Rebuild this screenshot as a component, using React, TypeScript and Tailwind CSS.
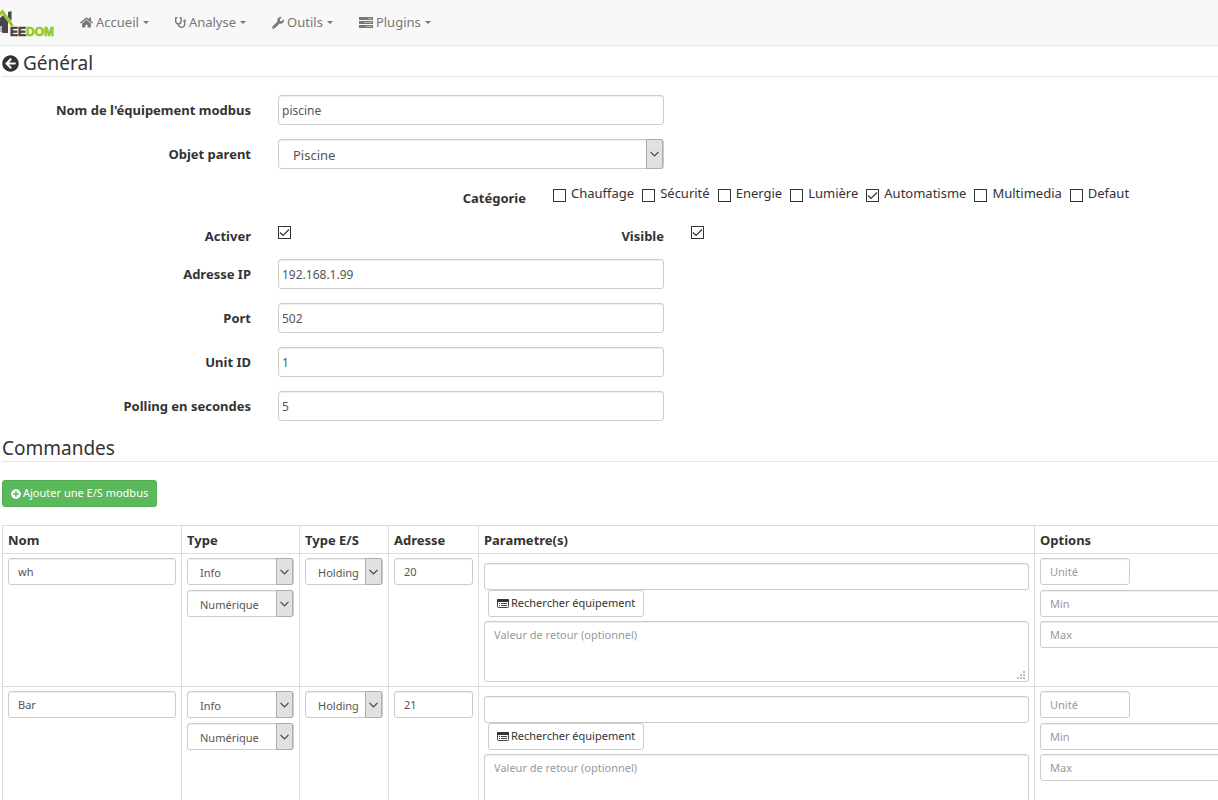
import { useState } from "react";
import { FaArrowCircleLeft, FaHome, FaPlusCircle, FaStethoscope, FaWrench } from "react-icons/fa";

const categories = ["Chauffage", "Sécurité", "Energie", "Lumière", "Automatisme", "Multimedia", "Defaut"];

const commands = [
  { id: 1, name: "wh", address: "20" },
  { id: 2, name: "Bar", address: "21" },
];

const control =
  "min-w-0 border border-[#ccc] rounded-[3px] bg-white text-[#555] placeholder:text-[#999] shadow-[inset_0_1px_1px_rgba(0,0,0,0.075)] focus:outline-none focus:border-[#66afe9]";
const small = control + " h-[27px] px-[9px] text-[11px]";
const formLabel = "pt-[6px] text-right font-bold leading-[18px]";

function TasksIcon() {
  return (
    <svg width="14" height="11" viewBox="0 0 14 11" fill="currentColor" aria-hidden="true">
      <path d="M0 0h14v3H0zM0 4h14v3H0zM0 8h14v3H0z" />
      <path d="M9 1h4v1H9zM5 5h8v1H5zM7 9h6v1H7z" fill="#f8f8f8" opacity="0.5" />
    </svg>
  );
}

function ListAltIcon() {
  return (
    <svg width="12" height="9" viewBox="0 0 12 9" fill="none" aria-hidden="true">
      <rect x="0.5" y="0.5" width="11" height="8" rx="0.8" stroke="#444" />
      <path d="M0 1a1 1 0 0 1 1-1h10a1 1 0 0 1 1 1v2H0z" fill="#333" />
      <path d="M2 4.500h1M4 4.500h6M2 6.500h1M4 6.500h6" stroke="#444" />
    </svg>
  );
}

function Logo() {
  return (
    <svg width="56" height="34" viewBox="0 0 56 34" role="img" aria-label="Jeedom">
      <path d="M0 12 3 9l5 7v11H3l-3-2z" fill="#45454b" />
      <path d="M0 20h2v6H0z" fill="#b9b9bd" />
      <path d="M8 6l3.500-1v10L8 11z" fill="#45454b" />
      <path d="M-1 9 2.500 5.500 12.500 20" stroke="#96c81e" strokeWidth="3" fill="none" />
      <text
        x="10"
        y="30"
        fontSize="12"
        fontWeight="bold"
        fontFamily="Liberation Sans, Arial, sans-serif"
        fill="#45454b"
        stroke="#45454b"
        strokeWidth="0.7"
      >
        EE
        <tspan fill="#96c81e" stroke="#96c81e">
          DOM
        </tspan>
      </text>
    </svg>
  );
}

function Checkbox({ id, defaultChecked }: { id: string; defaultChecked?: boolean }) {
  return (
    <span className="grid size-[13px] shrink-0">
      <input
        id={id}
        type="checkbox"
        defaultChecked={defaultChecked}
        className="peer col-start-1 row-start-1 size-[13px] appearance-none border border-[#333] bg-white"
      />
      <svg
        viewBox="0 0 13 13"
        className="pointer-events-none invisible col-start-1 row-start-1 size-[13px] peer-checked:visible"
        aria-hidden="true"
      >
        <path d="m2 6.500 3 3 6-6" fill="none" stroke="#333" strokeWidth="1.200" />
      </svg>
    </span>
  );
}

interface SelectProps {
  id?: string;
  label?: string;
  options: string[];
  large?: boolean;
}

function Select({ id, label, options, large }: SelectProps) {
  return (
    <span className="grid w-full">
      <select
        id={id}
        aria-label={label}
        className={`${control} col-start-1 row-start-1 w-full appearance-none ${
          large ? "h-[30px] pl-[14px] pt-[3px] text-[13px]" : "h-[27px] pl-3 pt-[3px] text-[11px]"
        }`}
      >
        {options.map((o) => (
          <option key={o}>{o}</option>
        ))}
      </select>
      <span className="pointer-events-none col-start-1 row-start-1 mr-px flex w-[17px] items-center justify-center justify-self-end rounded-r-[2px] border border-[#adadad] bg-[#e1e1e1]">
        <svg width="9" height="6" viewBox="0 0 9 6" aria-hidden="true">
          <path d="m0.500 0.800 4 4 4-4" fill="none" stroke="#444" strokeWidth="1.200" />
        </svg>
      </span>
    </span>
  );
}

function TextRow({ id, label, value }: { id: string; label: string; value: string }) {
  return (
    <div className="grid grid-cols-[251fr_386fr_527fr] gap-x-[27px]">
      <label htmlFor={id} className={formLabel}>
        {label}
      </label>
      <input id={id} type="text" defaultValue={value} className={`${control} h-[30px] w-full px-[3px] text-xs`} />
    </div>
  );
}

function CommandRow({ name, address }: { name: string; address: string }) {
  const cell = "border border-[#ddd] px-[5px] py-1 align-top";
  return (
    <tr>
      <td className={cell}>
        <input aria-label="Nom" defaultValue={name} className={`${small} block w-full`} />
      </td>
      <td className={cell}>
        <div className="flex flex-col gap-[5px]">
          <Select label="Type" options={["Info", "Action"]} />
          <Select label="Sous-type" options={["Numérique", "Binaire", "Autre"]} />
        </div>
      </td>
      <td className={cell}>
        <Select label="Type E/S" options={["Holding", "Input", "Coil"]} />
      </td>
      <td className={cell}>
        <input aria-label="Adresse" defaultValue={address} className={`${small} block w-full`} />
      </td>
      <td className={cell}>
        <input aria-label="Paramètre" className={`${small} mt-[5px] block w-full`} />
        <button
          type="button"
          className="ml-1 flex h-[27px] items-center gap-[2px] rounded-[3px] border border-[#ccc] bg-white px-2 text-[11px] text-[#333] hover:bg-[#e6e6e6]"
        >
          <ListAltIcon />
          Rechercher équipement
        </button>
        <div className="mt-1 grid">
          <textarea
            aria-label="Valeur de retour"
            placeholder="Valeur de retour (optionnel)"
            className={`${control} col-start-1 row-start-1 h-[61px] w-full resize-none px-[9px] py-1 text-[11px] leading-[18px]`}
          />
          <svg
            width="8"
            height="8"
            viewBox="0 0 8 8"
            fill="#bbb"
            className="pointer-events-none col-start-1 row-start-1 mb-[3px] mr-[4px] self-end justify-self-end"
            aria-hidden="true"
          >
            <path d="M6 0h2v2H6zM3 3h2v2H3zM6 3h2v2H6zM0 6h2v2H0zM3 6h2v2H3zM6 6h2v2H6z" />
          </svg>
        </div>
      </td>
      <td className={cell}>
        <input aria-label="Unité" placeholder="Unité" className={`${small} block w-[90px]`} />
        <input aria-label="Min" placeholder="Min" className={`${small} mt-[5px] block w-full`} />
        <input aria-label="Max" placeholder="Max" className={`${small} mt-1 block w-full`} />
      </td>
    </tr>
  );
}

export default function App() {
  const [rows, setRows] = useState(commands);
  const addRow = () => setRows([...rows, { id: rows.length + 1, name: "", address: "" }]);

  const menu = [
    { label: "Accueil", icon: <FaHome size={13} /> },
    { label: "Analyse", icon: <FaStethoscope size={11} /> },
    { label: "Outils", icon: <FaWrench size={12} /> },
    { label: "Plugins", icon: <TasksIcon /> },
  ];
  const th = "border border-[#ddd] px-[5px] pb-[3px] pt-[5px] text-left font-bold leading-[19px]";

  return (
    <div className="min-h-screen overflow-x-clip bg-white font-['Noto_Sans',sans-serif] text-[13px] text-[#333]">
      <nav className="flex h-[46px] items-center border-b border-[#e7e7e7] bg-[#f8f8f8] text-[#777]">
        <a href="#" className="mr-6">
          <Logo />
        </a>
        <ul className="flex gap-[26px]">
          {menu.map(({ label, icon }) => (
            <li key={label}>
              <a href="#" className="flex items-center gap-[3px] hover:text-[#333]">
                {icon}
                {label}
                <span className="ml-px border-x-[3px] border-t-[3px] border-x-transparent border-t-[#777]" />
              </a>
            </li>
          ))}
        </ul>
      </nav>

      <main className="pl-[2px]">
        <h1 className="flex h-[31px] items-center gap-1 border-b border-[#e5e5e5] pt-[5px] text-[19px]">
          <a href="#" aria-label="Retour">
            <FaArrowCircleLeft size={17} />
          </a>
          Général
        </h1>
        <form className="-ml-[2px] flex flex-col gap-[14px] pt-[18px]">
          <TextRow id="name" label="Nom de l'équipement modbus" value="piscine" />
          <div className="grid grid-cols-[251fr_386fr_527fr] gap-x-[27px]">
            <label htmlFor="parent" className={formLabel}>
              Objet parent
            </label>
            <Select id="parent" options={["Piscine", "Aucun"]} large />
          </div>
          <fieldset className="grid grid-cols-[526fr_665fr] gap-x-[27px]" aria-labelledby="category">
            <span id="category" className={formLabel}>
              Catégorie
            </span>
            <div className="flex flex-wrap gap-x-2">
              {categories.map((c) => (
                <div key={c} className="flex items-end gap-[5px] self-start pt-px">
                  <Checkbox id={c} defaultChecked={c === "Automatisme"} />
                  <label htmlFor={c} className="leading-[18px]">
                    {c}
                  </label>
                </div>
              ))}
            </div>
          </fieldset>
          <div className="grid grid-cols-[251fr_386fr_527fr] gap-x-[27px]">
            <label htmlFor="enabled" className={formLabel}>
              Activer
            </label>
            <div className="flex justify-between">
              <span className="pt-[5px]">
                <Checkbox id="enabled" defaultChecked />
              </span>
              <label htmlFor="visible" className={formLabel}>
                Visible
              </label>
            </div>
            <span className="pt-[5px]">
              <Checkbox id="visible" defaultChecked />
            </span>
          </div>
          <TextRow id="ip" label="Adresse IP" value="192.168.1.99" />
          <TextRow id="port" label="Port" value="502" />
          <TextRow id="unit" label="Unit ID" value="1" />
          <TextRow id="polling" label="Polling en secondes" value="5" />
        </form>

        <h2 className="mt-[15px] border-b border-[#e5e5e5] text-[19px] leading-[25px]">Commandes</h2>
        <button
          type="button"
          onClick={addRow}
          className="mt-[18px] flex h-[27px] items-center gap-[2px] rounded-[3px] border border-[#4cae4c] bg-[#5cb85c] px-2 text-[11px] text-white hover:bg-[#449d44]"
        >
          <FaPlusCircle size={10} />
          Ajouter une E/S modbus
        </button>

        <table className="mt-[18px] w-[calc(100%+60px)] table-fixed border-collapse">
          <colgroup>
            <col className="w-[179px]" />
            <col className="w-[118px]" />
            <col className="w-[89px]" />
            <col className="w-[90px]" />
            <col />
            <col className="w-[243px]" />
          </colgroup>
          <thead>
            <tr>
              <th className={th}>Nom</th>
              <th className={th}>Type</th>
              <th className={th}>Type E/S</th>
              <th className={th}>Adresse</th>
              <th className={th}>Parametre(s)</th>
              <th className={th}>Options</th>
            </tr>
          </thead>
          <tbody>
            {rows.map((row) => (
              <CommandRow key={row.id} name={row.name} address={row.address} />
            ))}
          </tbody>
        </table>
      </main>
    </div>
  );
}
